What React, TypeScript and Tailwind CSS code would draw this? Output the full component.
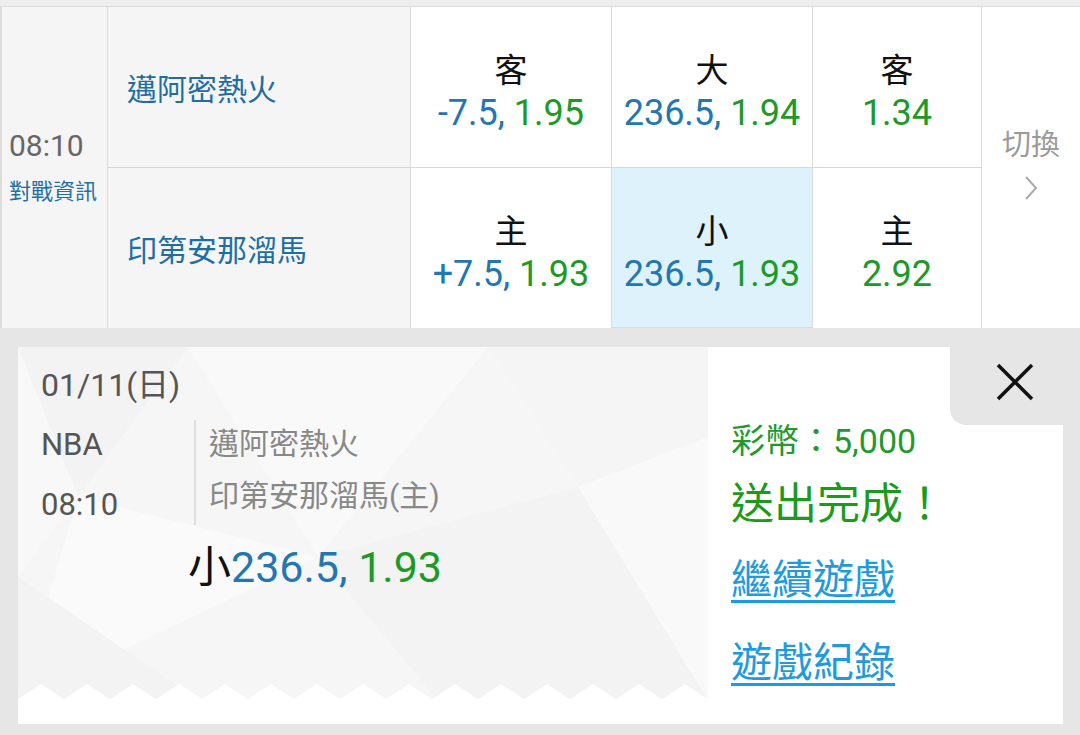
import React from 'react';

const font = { fontFamily: 'Roboto, "Noto Sans CJK TC", sans-serif' };

type Odd = { label: string; line?: string; price: string; selected?: boolean };

const rows: { team: string; odds: Odd[] }[] = [
    {
        team: '邁阿密熱火',
        odds: [
            { label: '客', line: '-7.5,', price: '1.95' },
            { label: '大', line: '236.5,', price: '1.94' },
            { label: '客', price: '1.34' },
        ],
    },
    {
        team: '印第安那溜馬',
        odds: [
            { label: '主', line: '+7.5,', price: '1.93' },
            { label: '小', line: '236.5,', price: '1.93', selected: true },
            { label: '主', price: '2.92' },
        ],
    },
];

function OddCell({ o, top }: { o: Odd; top: boolean }) {
    return (
        <div
            className={`flex flex-col items-center justify-center pt-[12px] border-r border-[#dcdcdc] ${
                top ? 'border-b border-b-[#cfd9df]' : ''
            } ${o.selected ? 'bg-[#def2fc] border-[#b3d6ea] border-b' : 'bg-white'}`}
        >
            <div className="text-[33px] leading-[40px] text-[#111]">{o.label}</div>
            <div className="text-[36px] leading-[44px] whitespace-nowrap">
                {o.line && <span className="text-[#2277b0]">{o.line} </span>}
                <span className="text-[#1c9a28]">{o.price}</span>
            </div>
        </div>
    );
}

function Pattern() {
    // zigzag bottom edge of the ticket
    const pts: string[] = ['0,0', '690,0'];
    let down = true;
    for (let x = 690; x >= 0; x -= 23) {
        pts.push(`${x},${down ? 352 : 337}`);
        down = !down;
    }
    const clip = pts.join(' ');
    return (
        <svg width="690" height="353" viewBox="0 0 690 353" className="absolute left-0 top-0">
            <defs>
                <clipPath id="zig">
                    <polygon points={clip} />
                </clipPath>
            </defs>
            <g clipPath="url(#zig)">
                <rect width="690" height="353" fill="#f6f6f6" />
                <polygon points="0,0 170,0 60,150" fill="#f3f3f3" />
                <polygon points="170,0 470,0 300,210" fill="#f9f9f9" />
                <polygon points="470,0 690,0 690,90 560,140" fill="#f5f5f5" />
                <polygon points="60,150 300,210 0,353" fill="#fafafa" />
                <polygon points="300,210 560,140 690,353 420,353" fill="#f3f3f3" />
                <polygon points="560,140 690,90 690,353" fill="#f9f9f9" />
                <polygon points="0,230 180,353 0,353" fill="#f3f3f3" />
                <polygon points="0,0 60,150 0,230" fill="#f8f8f8" />
            </g>
        </svg>
    );
}

export default function App() {
    return (
        <div className="w-[1080px] h-[735px] overflow-hidden bg-[#e6e6e6]" style={font}>
            <div className="h-[7px] bg-[#eeeeee] border-b border-[#dcdcdc]" />

            {/* odds table */}
            <div className="grid grid-cols-[108px_303px_201px_201px_169px_98px] grid-rows-[161px_160px]">
                <div className="row-span-2 flex flex-col justify-center pl-[7px] bg-[#f5f5f5] border-l-2 border-r border-[#dcdcdc]">
                    <div className="text-[30px] leading-[36px] text-[#666]">08:10</div>
                    <div className="mt-[13px] text-[22px] leading-[30px] text-[#1f72a8] whitespace-nowrap">對戰資訊</div>
                </div>

                {rows.map((r, i) => (
                    <React.Fragment key={r.team}>
                        <div
                            className={`flex items-center pl-[19px] pt-[4px] bg-[#f5f5f5] border-r border-[#dcdcdc] ${
                                i === 0 ? 'border-b border-b-[#cfd9df]' : ''
                            }`}
                        >
                            <span className="text-[30px] text-[#1d6fa3]">{r.team}</span>
                        </div>
                        {r.odds.map((o, j) => (
                            <OddCell key={j} o={o} top={i === 0} />
                        ))}
                        {i === 0 && (
                            <div className="row-span-2 flex flex-col items-center justify-center pb-[8px] bg-white">
                                <div className="text-[29px] leading-[36px] text-[#9a9a9a]">切換</div>
                                <svg width="14" height="26" viewBox="0 0 14 26" className="mt-[12px]">
                                    <path d="M2 2 L12 13 L2 24" fill="none" stroke="#aaaaaa" strokeWidth="2" />
                                </svg>
                            </div>
                        )}
                    </React.Fragment>
                ))}
            </div>

            {/* ticket */}
            <div className="mt-[19px] ml-[18px] w-[1045px] h-[377px] flex bg-white">
                <div className="relative w-[690px] h-full">
                    <Pattern />
                    <div className="relative pl-[23px] pt-[18px]">
                        <div className="text-[32px] leading-[40px] text-[#555]">01/11(日)</div>
                        <div className="mt-[10px] flex">
                            <div className="w-[153px] text-[31px] leading-[60px] text-[#555]">
                                <div>NBA</div>
                                <div>08:10</div>
                            </div>
                            <div className="mt-[5px] h-[105px] border-l-2 border-[#dedede] pl-[13px] text-[30px] leading-[52px] text-[#888] whitespace-nowrap">
                                <div className="-mt-[2px]">邁阿密熱火</div>
                                <div>印第安那溜馬(主)</div>
                            </div>
                        </div>
                        <div className="mt-[7px] ml-[147px] text-[43px] leading-[50px] whitespace-nowrap">
                            <span className="text-[#111]">小</span>
                            <span className="text-[#2277b0]">236.5, </span>
                            <span className="text-[#1c9a28]">1.93</span>
                        </div>
                    </div>
                </div>

                <div className="flex-1 flex flex-col">
                    <div className="flex justify-end">
                        <div className="w-[113px] h-[78px] bg-[#e6e6e6] rounded-bl-[16px] pl-[46px] pt-[16px]">
                            <svg width="38" height="38" viewBox="0 0 38 38">
                                <path d="M2 2 L36 36 M36 2 L2 36" stroke="#111" strokeWidth="3.5" />
                            </svg>
                        </div>
                    </div>
                    <div className="pl-[23px]">
                        <div className="-mt-[4px] text-[34px] leading-[40px] text-[#22992a] whitespace-nowrap">彩幣：5,000</div>
                        <div className="mt-[18px] text-[43px] leading-[50px] text-[#1b9a1b] whitespace-nowrap">送出完成！</div>
                        <div className="mt-[26px] text-[41px] leading-[50px] text-[#1e9be0] underline decoration-[3px] underline-offset-[6px] whitespace-nowrap">
                            繼續遊戲
                        </div>
                        <div className="mt-[33px] text-[41px] leading-[50px] text-[#1e9be0] underline decoration-[3px] underline-offset-[6px] whitespace-nowrap">
                            遊戲紀錄
                        </div>
                    </div>
                </div>
            </div>
        </div>
    );
}
